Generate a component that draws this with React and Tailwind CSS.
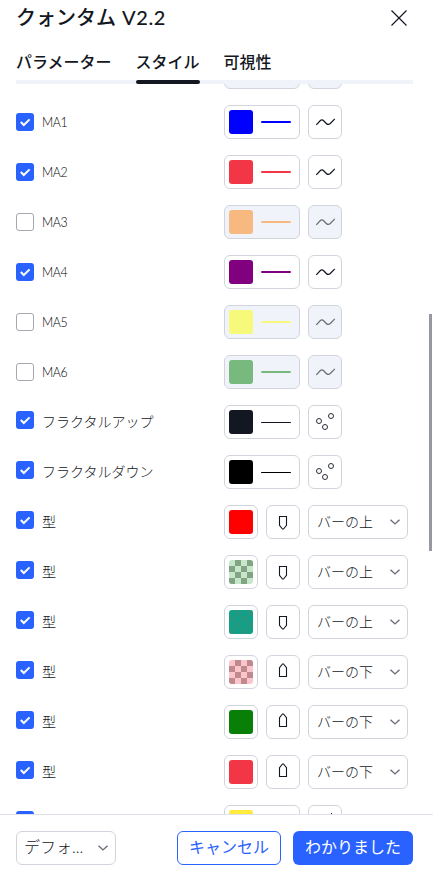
const lineRows = [
  { label: 'MA1', color: '#0000ff', checked: true },
  { label: 'MA2', color: '#f23645', checked: true },
  { label: 'MA3', color: '#f7b97f', checked: false },
  { label: 'MA4', color: '#800080', checked: true },
  { label: 'MA5', color: '#f7f97a', checked: false },
  { label: 'MA6', color: '#78b97e', checked: false },
];

const fractalRows = [
  { label: 'フラクタルアップ', color: '#131722' },
  { label: 'フラクタルダウン', color: '#000000' },
];

const shapeRows = [
  { color: '#ff0000', place: 'バーの上' },
  { color: '#c8e6c9', checker: '#81a584', place: 'バーの上' },
  { color: '#12a089', checker: '#229980', place: 'バーの上' },
  { color: '#fcc5cb', checker: '#bf8a8e', place: 'バーの下' },
  { color: '#088008', place: 'バーの下' },
  { color: '#f23645', place: 'バーの下' },
];

function Checkbox({ checked }) {
  if (!checked) {
    return <span className="w-[18px] h-[18px] shrink-0 rounded-[3px] border border-[#a6a8b0] bg-white" />;
  }
  return (
    <span className="w-[18px] h-[18px] shrink-0 rounded-[3px] bg-[#2962ff]">
      <svg width="18" height="18" viewBox="0 0 18 18" fill="none" stroke="#fff" strokeWidth="2">
        <path d="M4.8 9l3 3 5.8-5.6" />
      </svg>
    </span>
  );
}

function Box({ className = 'w-[34px]', disabled, children }) {
  return (
    <div
      className={`h-[34px] shrink-0 flex items-center rounded-md border border-[#d1d4dc] ${
        disabled ? 'bg-[#f0f3fa]' : 'bg-white'
      } ${className}`}
    >
      {children}
    </div>
  );
}

function Swatch({ color, checker }) {
  return (
    <svg width="24" height="24" className="ml-1 shrink-0 rounded-[3px]" shapeRendering="crispEdges">
      <rect width="24" height="24" fill={color} />
      {checker &&
        [0, 1, 2, 3].map((r) =>
          [0, 1, 2, 3].map(
            (c) =>
              (r + c) % 2 === 1 && (
                <rect key={`${r}-${c}`} x={c * 6} y={r * 6} width="6" height="6" fill={checker} />
              )
          )
        )}
    </svg>
  );
}

function ColorLine({ color, thin, disabled }) {
  return (
    <Box className="w-[76px]" disabled={disabled}>
      <Swatch color={color} />
      <span
        className={`ml-2 w-[30px] rounded-full ${thin ? 'h-px mt-px' : 'h-0.5'}`}
        style={{ backgroundColor: color }}
      />
    </Box>
  );
}

function WaveIcon({ disabled }) {
  return (
    <svg width="32" height="32" viewBox="0 0 32 32" fill="none" stroke={disabled ? '#6a6d78' : '#131722'} strokeWidth="1.2">
      <path d="M7.3 18.9l3.6-3.9c1.5-1.5 2.6-1.5 4 0l2.4 2.5c1.5 1.5 2.5 1.4 4 0l4.5-4.6" />
    </svg>
  );
}

function CirclesIcon() {
  return (
    <svg width="32" height="32" viewBox="0 0 32 32" fill="none" stroke="#2a2e39">
      <circle cx="10" cy="15" r="2.5" />
      <circle cx="16" cy="21" r="2.5" />
      <circle cx="22" cy="10" r="2.5" />
    </svg>
  );
}

function ColumnsIcon() {
  return (
    <svg width="32" height="32" viewBox="0 0 32 32" fill="#131722">
      <path d="M10 14h1v10h-1zM16 11h1v13h-1zM22 7h1v17h-1z" />
    </svg>
  );
}

function LabelIcon({ up }) {
  return (
    <svg width="32" height="32" viewBox="0 0 32 32" fill="none" stroke="#131722" strokeWidth="1.1">
      {up ? (
        <path d="M12.5 20.5h7v-8.8L16.5 8h-1l-3 3.7z" />
      ) : (
        <path d="M12.5 10.5h7v8.8l-3 3.7h-1l-3-3.7z" />
      )}
    </svg>
  );
}

function Chevron() {
  return (
    <svg width="10" height="6" viewBox="0 0 10 6" fill="none" stroke="#6a6d78" strokeWidth="1.4" className="shrink-0">
      <path d="M0.5 0.7L5 4.9l4.5-4.2" />
    </svg>
  );
}

function Row({ label, checked = true, raised, children }) {
  return (
    <div className="h-[50px] shrink-0 flex items-center">
      <div className={`w-[208px] flex items-center gap-2 text-sm leading-5 ${raised ? 'pb-1' : ''}`}>
        <Checkbox checked={checked} />
        <span
          className={
            raised ? 'pt-[3px] font-light' : 'inline-block origin-left scale-x-[0.88] font-light tracking-[-0.4px] text-black'
          }
        >
          {label}
        </span>
      </div>
      <div className="flex gap-2">{children}</div>
    </div>
  );
}

export default function App() {
  return (
    <div className="relative w-[433px] h-[873px] flex flex-col overflow-hidden bg-white text-[#131722] font-[Lato,'Noto_Sans_CJK_JP',sans-serif]">
      <header className="h-[37px] shrink-0 pl-4 pr-[26px] pb-[2px] flex items-center justify-between">
        <h1 className="text-[20px] leading-7 font-medium -mt-px">
          クォンタム <span className="ml-px tracking-[0.6px]">V2.2</span>
        </h1>
        <svg width="16" height="16" viewBox="0 0 16 16" fill="none" stroke="#131722" strokeWidth="1.2">
          <path d="M0.5 0.5l15 15M15.5 0.5l-15 15" />
        </svg>
      </header>

      <nav className="h-[47px] shrink-0 mx-4 mr-5 flex gap-6 border-b-4 border-[#f0f3fa] text-base leading-6 font-medium">
        <span className="pt-[13px]">パラメーター</span>
        <span className="h-[47px] pt-[13px] relative">
          スタイル
          <span className="absolute left-0 right-0 bottom-0 h-1 rounded-full bg-[#131722]" />
        </span>
        <span className="pt-[13px]">可視性</span>
      </nav>

      <main className="h-[730px] shrink-0 px-4 overflow-hidden">
        <div className="-mt-[37px] flex flex-col">
          <Row label="" checked={false}>
            <Box className="w-[76px]" disabled />
            <Box disabled />
          </Row>
          {lineRows.map((row) => (
            <Row key={row.label} label={row.label} checked={row.checked}>
              <ColorLine color={row.color} disabled={!row.checked} />
              <Box disabled={!row.checked}>
                <WaveIcon disabled={!row.checked} />
              </Box>
            </Row>
          ))}
          {fractalRows.map((row) => (
            <Row key={row.label} label={row.label} raised>
              <ColorLine color={row.color} thin />
              <Box>
                <CirclesIcon />
              </Box>
            </Row>
          ))}
          {shapeRows.map((row, i) => (
            <Row key={i} label="型" raised>
              <Box>
                <Swatch color={row.color} checker={row.checker} />
              </Box>
              <Box>
                <LabelIcon up={row.place === 'バーの下'} />
              </Box>
              <Box className="w-[100px] justify-between pl-2 pr-[7px] text-sm font-light">
                <span>{row.place}</span>
                <Chevron />
              </Box>
            </Row>
          ))}
          <Row label="" raised>
            <ColorLine color="#ffeb3b" />
            <Box>
              <ColumnsIcon />
            </Box>
          </Row>
        </div>
      </main>

      <footer className="h-[59px] shrink-0 pl-4 pr-5 flex items-center pt-2 border-t border-[#e0e3eb] text-base">
        <Box className="w-[100px] justify-between pl-[7px] pr-[7px] font-light">
          <span className="pb-0.5">デフォ...</span>
          <Chevron />
        </Box>
        <button className="ml-auto w-[104px] h-[34px] pb-0.5 rounded-md border border-[#2962ff] text-[#2962ff] leading-6">
          キャンセル
        </button>
        <button className="ml-3 w-[120px] h-[34px] pb-0.5 rounded-md bg-[#2962ff] text-white leading-6">
          わかりました
        </button>
      </footer>

      <div className="absolute right-px top-[314px] w-[3px] h-[237px] bg-[#9598a1]" />
    </div>
  );
}
